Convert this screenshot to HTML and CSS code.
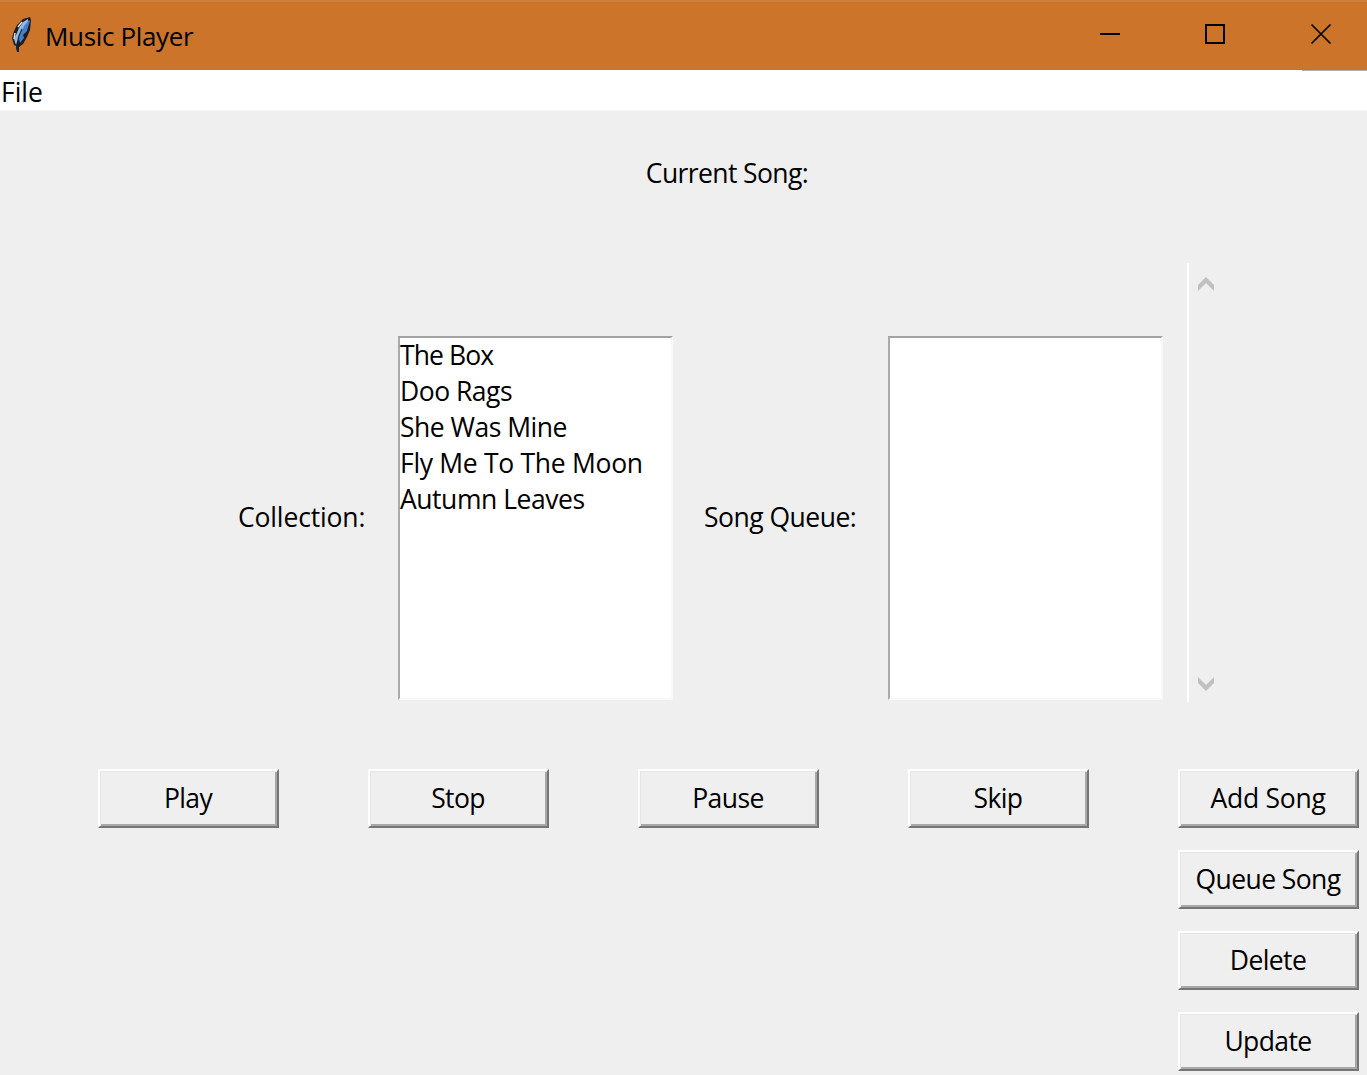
FILE: index.html
```html
<!DOCTYPE html>
<html lang="en">
<head>
<meta charset="utf-8">
<title>Music Player</title>
<link rel="stylesheet" href="styles.css">
</head>
<body>
<div class="window">
  <header class="titlebar">
    <svg class="feather" width="24" height="38" viewBox="0 0 24 38">
      <path d="M20 1 L13 3 L7 9 L4 15 L2 22 L4 29 L6 30 L7 36 L9 36 L9 31 L13 28 L17 21 L20 14 L21 4 Z" fill="#1c1c22"/>
      <path d="M18 3 L13 6 L9 12 L6 19 L4 23 L6 29 L12 17 L18 7 Z" fill="#91b9e3"/>
      <path d="M19 4 L14 10 L9 22 L10 27 L14 22 L13 19 L17 15 L18 11 L20 5 Z" fill="#4580cc"/>
      <path d="M12 13 L9 20 L7 28 L7 34" fill="none" stroke="#152335" stroke-width="1.2"/>
      <path d="M5 17 L4 23 M8 11 L12 6" stroke="#e0ddd4" stroke-width="1.5"/>
    </svg>
    <h1 class="title">Music Player</h1>
    <div class="controls">
      <svg width="22" height="22" viewBox="0 0 22 22"><path d="M2 11H22" stroke="#000" stroke-width="2"/></svg>
      <svg width="22" height="22" viewBox="0 0 22 22"><rect x="2" y="2" width="18" height="18" fill="none" stroke="#000" stroke-width="2"/></svg>
      <svg width="22" height="22" viewBox="0 0 22 22"><path d="M1.5 1.5L20.5 20.5M20.5 1.5L1.5 20.5" stroke="#000" stroke-width="1.7"/></svg>
    </div>
  </header>
  <nav class="menubar"><span class="file">File</span><i class="menu-edge"></i></nav>
  <main class="content">
    <div class="current"><span>Current Song:</span></div>
    <section class="lists">
      <span class="label collection">Collection:</span>
      <ul class="listbox">
        <li class="t-box">The Box</li>
        <li class="t-rags">Doo Rags</li>
        <li class="t-mine">She Was Mine</li>
        <li class="t-moon">Fly Me To The Moon</li>
        <li class="t-leaves">Autumn Leaves</li>
      </ul>
      <span class="label queue">Song Queue:</span>
      <ul class="listbox"></ul>
      <div class="scrollbar">
        <svg width="18" height="16" viewBox="0 0 18 16"><path d="M1 9L9 1L17 9V15L9 7L1 15Z" fill="#c0c0c0"/></svg>
        <svg width="18" height="16" viewBox="0 0 18 16"><path d="M1 1L9 9L17 1V7L9 15L1 7Z" fill="#c0c0c0"/></svg>
      </div>
    </section>
    <section class="buttons">
      <button>Play</button>
      <button>Stop</button>
      <button>Pause</button>
      <button>Skip</button>
      <div class="stack">
        <button class="wide">Add Song</button>
        <button>Queue Song</button>
        <button>Delete</button>
        <button>Update</button>
      </div>
    </section>
  </main>
</div>
</body>
</html>
```
FILE: styles.css
```css
* { box-sizing: border-box; }
body {
  margin: 0;
  background: #efefef;
  color: #000;
  font: 26.5px/36px "Open Sans", "Noto Sans", sans-serif;
  letter-spacing: -0.6px;
  white-space: nowrap;
}
.window { width: 1367px; height: 1075px; overflow: hidden; }
.titlebar {
  display: flex;
  align-items: center;
  height: 70px;
  padding: 0 0 2px 10px;
  background: #cb742a;
  border-top: 2px solid #cf7f3c;
}
.feather { flex: none; }
.title {
  margin: 2px 0 0 11px;
  font: 26px/36px "Open Sans", "Noto Sans", sans-serif;
  letter-spacing: -0.35px;
}
.controls {
  display: flex;
  gap: 84px;
  margin: 0 35px 2px auto;
}
.controls svg { display: block; }
.menubar {
  display: flex;
  justify-content: space-between;
  height: 41px;
  padding-left: 1px;
  background: #fff;
  border-bottom: 1px solid #f7f7f7;
}
.file { padding-top: 4px; letter-spacing: 0; }
.menu-edge { width: 65px; height: 1px; background: #b3aca9; }
.current {
  height: 152px;
  padding: 44px 0 0 87px;
  text-align: center;
}
.lists { display: flex; height: 439px; padding-left: 238px; }
.label { flex: none; padding-top: 236px; }
.collection { width: 160px; letter-spacing: -0.15px; }
.queue { width: 215px; padding-left: 31px; letter-spacing: -0.5px; }
.listbox {
  flex: none;
  width: 275px;
  height: 364px;
  margin: 73px 0 0;
  padding: 0;
  list-style: none;
  background: #fff;
  border: solid #f8f8f8;
  border-width: 2px;
  border-top: 2px solid #a2a2a2;
  border-left-color: #aaa;
}
.listbox li { position: relative; top: -1px; }
.t-box { letter-spacing: -0.9px; }
.t-rags { letter-spacing: -0.5px; }
.t-mine { letter-spacing: -0.5px; }
.t-moon { letter-spacing: -0.3px; }
.t-leaves { letter-spacing: -0.45px; }
.scrollbar {
  display: flex;
  flex-direction: column;
  justify-content: space-between;
  margin-left: 24px;
  padding: 13px 0 10px 8px;
  border-left: 2px solid #fff;
}
.scrollbar svg { display: block; }
.buttons {
  display: grid;
  grid-template-columns: repeat(5, 181px);
  column-gap: 89px;
  align-items: start;
  padding: 67px 0 0 98px;
}
button {
  display: block;
  width: 181px;
  height: 59px;
  padding: 0 1px 2px 0;
  color: #000;
  font: inherit;
  letter-spacing: inherit;
  background: #efefef;
  border: 2px solid;
  border-color: #fff #757575 #757575 #fff;
  box-shadow: inset 1px 1px #e6e6e6, inset -2px -2px #a8a8a8;
}
.wide { letter-spacing: -0.25px; }
.stack { display: grid; row-gap: 22px; }
```
